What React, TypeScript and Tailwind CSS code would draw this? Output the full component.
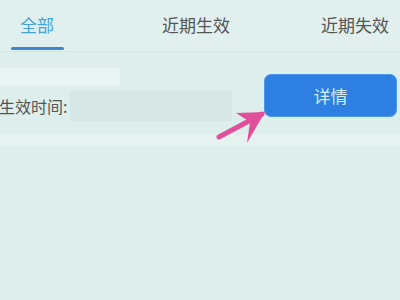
export default function App() {
  const tabs = ['全部', '近期生效', '近期失效'];
  return (
    <div
      className="w-[400px] h-[300px] overflow-hidden bg-[#ddeeec] text-[#555]"
      style={{ fontFamily: '"Noto Sans CJK SC", "Noto Sans", sans-serif' }}
    >
      {/* tab bar */}
      <div className="h-[52px] flex items-start bg-[#e1f0ee] border-b border-[#d3e6e3]">
        <div className="w-[74px] flex flex-col items-center pt-[12px]">
          <span className="text-[17px] leading-[26px] text-[#44a3d8]">{tabs[0]}</span>
          <div className="mt-[9px] w-[53px] h-[3px] rounded-full bg-[#3b87d2]" />
        </div>
        <div className="ml-[88px] pt-[12px] text-[17px] leading-[26px]">{tabs[1]}</div>
        <div className="ml-[91px] pt-[12px] text-[17px] leading-[26px]">{tabs[2]}</div>
      </div>

      {/* record row */}
      <div className="relative h-[82px] flex items-start">
        <div className="flex flex-col pt-[16px]">
          <div className="w-[120px] h-[18px] bg-[#e8f4f2]" />
          <div className="mt-[5px] flex items-center">
            <span className="text-[16px] leading-[26px] text-[#555] -ml-[1px]">生效时间:</span>
            <div className="ml-[3px] w-[162px] h-[30px] bg-[#d6e6e4]" />
          </div>
        </div>
        <button className="ml-auto mr-[3px] mt-[22px] w-[133px] h-[43px] rounded-[7px] bg-[#2d80e2] border border-[#4d98ea] text-[17px] text-[#d3ecf4]">
          详情
        </button>
        <svg className="absolute left-[212px] top-[52px]" width="60" height="44" viewBox="0 0 60 44">
          <path d="M7 33 L50 10" stroke="#e0509a" strokeWidth="5" strokeLinecap="round" fill="none" />
          <path d="M53 8 L24 9 L38 18 L35 39 Z" fill="#e0509a" />
        </svg>
      </div>

      <div className="h-[12px] bg-[#e5f2f0]" />
    </div>
  );
}
